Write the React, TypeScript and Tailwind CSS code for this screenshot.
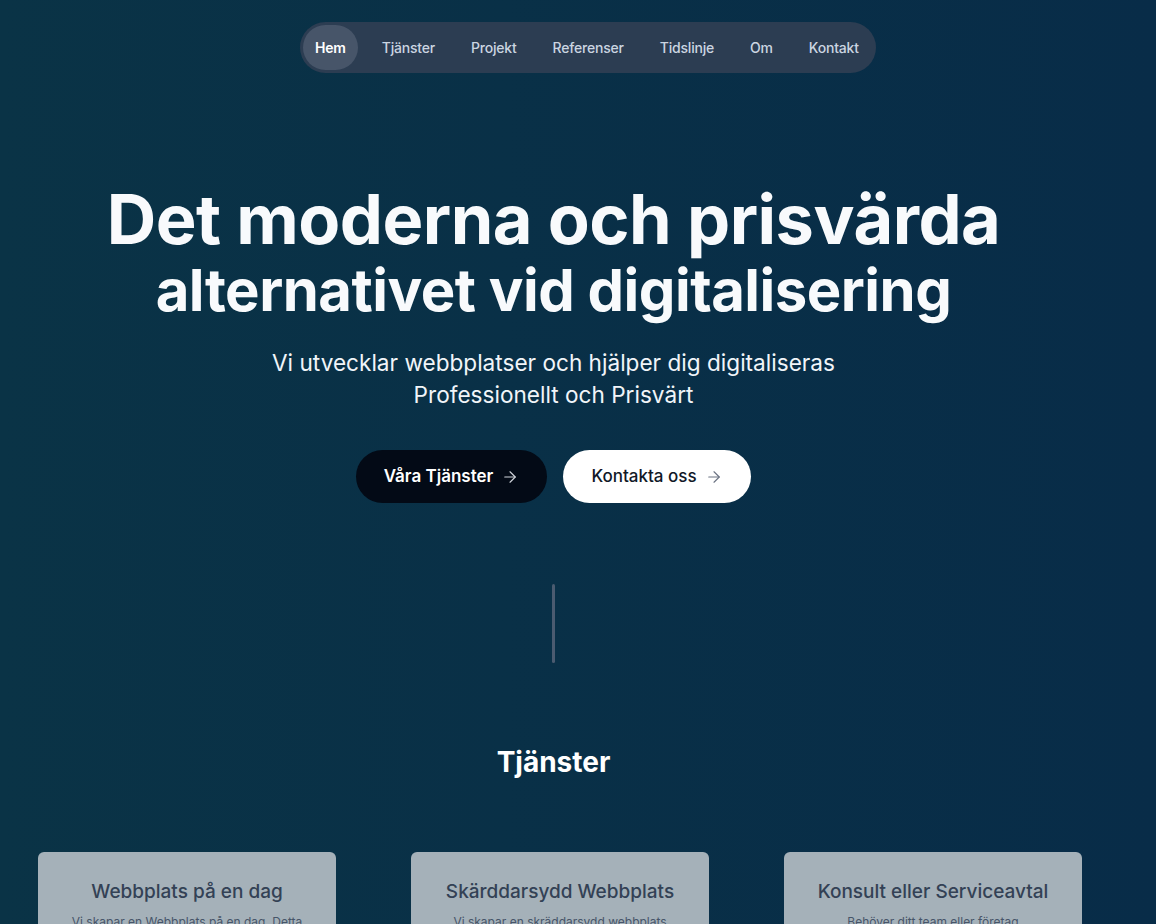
import { ArrowRight } from "lucide-react"

const navItems = ["Hem", "Tjänster", "Projekt", "Referenser", "Tidslinje", "Om", "Kontakt"]

const services = [
  {
    title: "Webbplats på en dag",
    text: "Vi skapar en Webbplats på en dag. Detta passar dig som vill komma igång snabbt.",
  },
  {
    title: "Skärddarsydd Webbplats",
    text: "Vi skapar en skräddarsydd webbplats anpassad efter dina behov.",
  },
  {
    title: "Konsult eller Serviceavtal",
    text: "Behöver ditt team eller företag utvecklingshjälp? Vi hjälper till.",
  },
]

export default function App() {
  return (
    <div
      className="h-[924px] w-full overflow-hidden bg-gradient-to-r from-[#0a3346] to-[#082c48] text-white"
      style={{ fontFamily: "Inter, 'Noto Sans', sans-serif" }}
    >
      <header className="pt-[22px]">
        <nav className="ml-[300px] flex h-[51px] w-fit items-center gap-3 rounded-full bg-[#2c3d52] pl-[3px] pr-[5px]">
          {navItems.map((item, i) => (
            <a
              key={item}
              href="#"
              className={
                i === 0
                  ? "flex h-[45px] items-center justify-center rounded-full bg-[#475569] px-3 text-[14px] font-semibold tracking-[-0.2px] text-white"
                  : "flex h-[45px] items-center justify-center px-3 text-[14px] font-medium tracking-[-0.2px] text-[#cbd5e1]"
              }
            >
              {item}
            </a>
          ))}
        </nav>
      </header>

      <main className="w-[1107px]">
        <section className="flex flex-col items-center pt-[108px] text-center">
          <h1 className="font-bold text-[#f8fafc]">
            <span className="block text-[68.5px] leading-[78px] tracking-[-0.5px]">Det moderna och prisvärda</span>
            <span className="block text-[58px] leading-[62px] tracking-[-0.5px]">alternativet vid digitalisering</span>
          </h1>
          <p className="mt-[26px] text-[22.6px] leading-[32px] text-[#f1f5f9]">
            Vi utvecklar webbplatser och hjälper dig digitaliseras
            <br />
            Professionellt och Prisvärt
          </p>
          <div className="mt-[39px] flex gap-4">
            <a
              href="#"
              className="flex h-[53px] w-[191px] items-center justify-center gap-2 rounded-full bg-[#030a16] text-[17px] font-semibold text-white"
            >
              Våra Tjänster
              <ArrowRight className="h-[18px] w-[18px] text-gray-300" strokeWidth={1.5} />
            </a>
            <a
              href="#"
              className="flex h-[53px] w-[188px] items-center justify-center gap-2 rounded-full bg-white text-[17px] font-medium text-[#111827]"
            >
              Kontakta oss
              <ArrowRight className="h-[18px] w-[18px] text-gray-500" strokeWidth={1.5} />
            </a>
          </div>
          <div className="mt-[81px] h-[79px] w-[3px] rounded-full bg-[#4b5b70]" />
        </section>

        <section className="pt-[81px]">
          <h2 className="text-center text-[28px] font-bold leading-[36px] text-white">Tjänster</h2>
        </section>
      </main>

      <div className="mt-[72px] grid grid-cols-[298px_298px_298px] gap-[75px] pl-[38px]">
        {services.map((s) => (
          <div key={s.title} className="h-[160px] rounded-md bg-[#a5b1b9] px-6 pt-[27px] text-center">
            <h3 className="text-[19px] font-medium leading-[26px] text-[#334155]">{s.title}</h3>
            <p className="mx-auto mt-[8px] w-[246px] text-[12px] leading-[18px] text-[#475569]">{s.text}</p>
          </div>
        ))}
      </div>
    </div>
  )
}
